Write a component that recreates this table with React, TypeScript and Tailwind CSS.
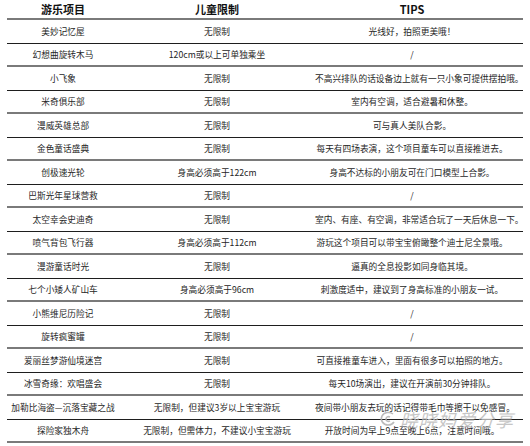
const rows: [string, string, string][] = [
  ["美妙记忆屋", "无限制", "光线好，拍照更美哦！"],
  ["幻想曲旋转木马", "120cm或以上可单独乘坐", "/"],
  ["小飞象", "无限制", "不高兴排队的话设备边上就有一只小象可提供摆拍哦。"],
  ["米奇俱乐部", "无限制", "室内有空调，适合避暑和休整。"],
  ["漫威英雄总部", "无限制", "可与真人美队合影。"],
  ["金色童话盛典", "无限制", "每天有四场表演，这个项目童车可以直接推进去。"],
  ["创极速光轮", "身高必须高于122cm", "身高不达标的小朋友可在门口模型上合影。"],
  ["巴斯光年星球营救", "无限制", "/"],
  ["太空幸会史迪奇", "无限制", "室内、有座、有空调，非常适合玩了一天后休息一下。"],
  ["喷气背包飞行器", "身高必须高于112cm", "游玩这个项目可以带宝宝俯瞰整个迪士尼全景哦。"],
  ["漫游童话时光", "无限制", "逼真的全息投影如同身临其境。"],
  ["七个小矮人矿山车", "身高必须高于96cm", "刺激度适中，建议到了身高标准的小朋友一试。"],
  ["小熊维尼历险记", "无限制", "/"],
  ["旋转疯蜜罐", "无限制", "/"],
  ["爱丽丝梦游仙境迷宫", "无限制", "可直接推童车进入，里面有很多可以拍照的地方。"],
  ["冰雪奇缘：欢唱盛会", "无限制", "每天10场演出，建议在开演前30分钟排队。"],
  ["加勒比海盗—沉落宝藏之战", "无限制，但建议3岁以上宝宝游玩", "夜间带小朋友去玩的话记得带毛巾等擦干以免感冒。"],
  ["探险家独木舟", "无限制，但需体力，不建议小宝宝游玩", "开放时间为早上9点至晚上6点，注意时间哦。"],
];

const font = { fontFamily: '"Noto Sans CJK SC", "Noto Sans", sans-serif' };

export default function App() {
  return (
    <main className="relative w-[530px] h-[446px] bg-white overflow-hidden" style={font}>
      <div className="ml-[7px] w-[516px] flex flex-col">
        {/* Header */}
        <div className="grid grid-cols-[112px_196px_194px] h-[20px] items-center border-b-2 border-[#7a7a7a] text-[11px] font-bold text-[#111] leading-none">
          <div className="text-center">游乐项目</div>
          <div className="text-center">儿童限制</div>
          <div className="text-center">TIPS</div>
        </div>

        {rows.map(([name, limit, tip], i) => (
          <div
            key={name}
            className={
              i % 2 === 0
                ? "grid grid-cols-[112px_196px_194px] h-[23.5px] items-center pt-[2px] border-b border-[#1e1e1e] text-[8.7px] text-[#262626] leading-none whitespace-nowrap"
                : "grid grid-cols-[112px_196px_194px] h-[23.5px] items-center pt-[2px] border-b-2 border-[#7a7a7a] text-[8.7px] text-[#262626] leading-none whitespace-nowrap"
            }
          >
            <div className="text-center">{name}</div>
            <div className="text-center">{limit}</div>
            <div className="text-center">{tip}</div>
          </div>
        ))}
      </div>

      {/* Watermark */}
      <div className="absolute left-[379px] top-[410px] flex items-center gap-[3px] opacity-85 pointer-events-none">
        <svg width="18" height="16" viewBox="0 0 18 16" fill="none" stroke="#b0b0b0" strokeWidth="1.6">
          <path d="M14 3C11 0.5 5 1 3 5c-2 4 1 9 6 9 3 0 5-1.5 6-3" />
          <path d="M11 6c-2-1-4 0-4 2s2 3 4 2" />
        </svg>
        <span className="text-[18px] italic text-[#bdbdbd] tracking-[1px] leading-none">晓晓妈爱分享</span>
      </div>
    </main>
  );
}
